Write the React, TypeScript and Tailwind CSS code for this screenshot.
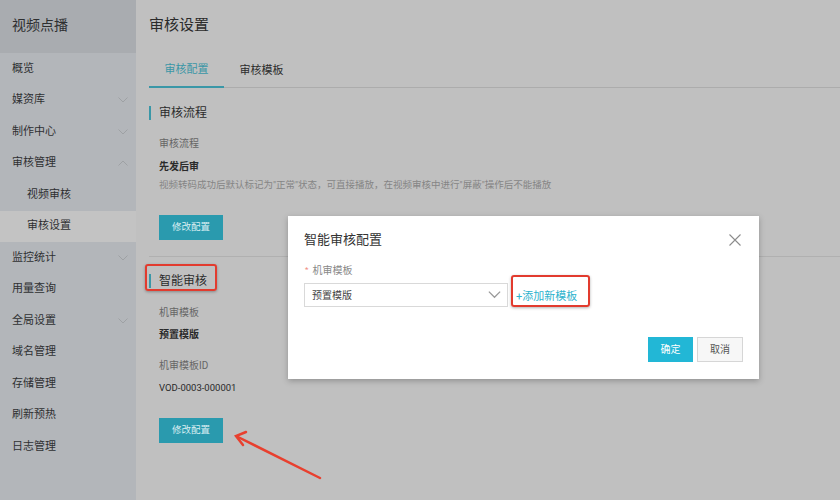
import { ReactNode } from "react";

const FONT = { fontFamily: 'Roboto, "Noto Sans CJK SC", sans-serif' };

type MenuItem = { label: string; chevron?: "down" | "up"; sub?: boolean; active?: boolean };

const menu: MenuItem[] = [
  { label: "概览" },
  { label: "媒资库", chevron: "down" },
  { label: "制作中心", chevron: "down" },
  { label: "审核管理", chevron: "up" },
  { label: "视频审核", sub: true },
  { label: "审核设置", sub: true, active: true },
  { label: "监控统计", chevron: "down" },
  { label: "用量查询" },
  { label: "全局设置", chevron: "down" },
  { label: "域名管理" },
  { label: "存储管理" },
  { label: "刷新预热" },
  { label: "日志管理" },
];

function Chevron({ dir, color = "#9ea1a4", w = 10 }: { dir: "down" | "up"; color?: string; w?: number }) {
  return (
    <svg width={w} height={w / 2 + 1} viewBox="0 0 10 6" fill="none">
      <polyline
        points={dir === "down" ? "0.5,0.5 5,5 9.5,0.5" : "0.5,5.5 5,1 9.5,5.5"}
        stroke={color}
        strokeWidth="1"
      />
    </svg>
  );
}

function Sidebar() {
  return (
    <aside className="w-[136px] shrink-0 bg-[#b3b6ba] flex flex-col">
      <div className="h-[53px] bg-[#a9acb0] flex items-center pl-3 pb-[3px] text-[14px] text-[#2e2f30]">
        视频点播
      </div>
      {menu.map((m) => (
        <div
          key={m.label}
          className={`h-[31.5px] flex items-center justify-between pr-[8px] text-[11px] text-[#2f3032] ${
            m.sub ? "pl-[27px]" : "pl-3"
          } ${m.active ? "bg-[#c3c3c3]" : ""}`}
        >
          <span>{m.label}</span>
          {m.chevron && <Chevron dir={m.chevron} />}
        </div>
      ))}
    </aside>
  );
}

function SectionTitle({ children }: { children: ReactNode }) {
  return (
    <div className="h-[14px] flex items-center">
      <div className="w-[2px] h-[14px] bg-[#3a97a7]" />
      <span className="ml-[8px] text-[12px] leading-[14px] text-[#2c2c2c]">{children}</span>
    </div>
  );
}

function EditButton({ className = "" }: { className?: string }) {
  return (
    <div
      className={`w-[64px] h-[25px] bg-[#2a9aae] text-[#d9eef2] text-[9.5px] flex items-center justify-center ${className}`}
    >
      修改配置
    </div>
  );
}

function Main() {
  return (
    <main className="flex-1 bg-[#c0c0c0] pl-[13px] relative">
      <div className="h-[50px] flex items-center text-[15px] text-[#2b2b2b]">审核设置</div>

      <div className="mt-[5px] h-[33px] border-b border-[#acacac] flex items-stretch">
        <div className="w-[75px] border-b-2 border-[#3a97a7] -mb-px flex items-center justify-center text-[11px] text-[#3a96a6]">
          审核配置
        </div>
        <div className="w-[75px] flex items-center justify-center text-[11px] text-[#2c2c2c]">
          审核模板
        </div>
      </div>

      <div className="mt-[18px]">
        <SectionTitle>审核流程</SectionTitle>
      </div>
      <div className="pl-[10px]">
        <div className="mt-[16px] h-[16px] leading-[16px] text-[10px] text-[#666]">审核流程</div>
        <div className="mt-[7px] h-[16px] leading-[16px] text-[10px] font-bold text-[#2a2a2a]">先发后审</div>
        <div className="mt-[2px] h-[16px] leading-[16px] text-[9.5px] text-[#858585]">
          视频转码成功后默认标记为"正常"状态，可直接播放，在视频审核中进行"屏蔽"操作后不能播放
        </div>
        <EditButton className="mt-[22px]" />
      </div>

      <div className="mt-[16px] h-px bg-[#b0b0b0]" />

      <div className="mt-[17px] relative w-fit">
        <SectionTitle>智能审核</SectionTitle>
        <div className="absolute -left-[4px] -top-[10px] w-[72px] h-[27px] border-2 border-[#e23b2e] rounded-[3px] shadow-[0_1px_3px_rgba(0,0,0,0.3)]" />
      </div>
      <div className="pl-[10px]">
        <div className="mt-[17px] h-[16px] leading-[16px] text-[10px] text-[#666]">机审模板</div>
        <div className="mt-[6px] h-[16px] leading-[16px] text-[10px] font-bold text-[#2a2a2a]">预置模版</div>
        <div className="mt-[15px] h-[16px] leading-[16px] text-[10px] text-[#666]">机审模板ID</div>
        <div className="mt-[6px] h-[16px] leading-[16px] text-[9.5px] text-[#2a2a2a]">VOD-0003-000001</div>
        <EditButton className="mt-[22px]" />
      </div>
    </main>
  );
}

function Modal() {
  return (
    <div className="absolute left-[288px] top-[216px] w-[471px] h-[163px] bg-white shadow-[0_2px_6px_rgba(0,0,0,0.25)] px-[16px] flex flex-col">
      <div className="mt-[15px] h-[18px] flex items-center justify-between">
        <span className="text-[13px] text-[#333]">智能审核配置</span>
        <svg width="12" height="12" viewBox="0 0 12 12" className="mr-[2px]">
          <path d="M0.5 0.5 L11.5 11.5 M11.5 0.5 L0.5 11.5" stroke="#8c8c8c" strokeWidth="1.1" />
        </svg>
      </div>
      <div className="mt-[14px] h-[14px] flex items-center text-[10px] text-[#888]">
        <span className="text-[#f08a80] text-[8px] mr-[4px] ml-[1px]">*</span>
        机审模板
      </div>
      <div className="mt-[6px] flex items-center">
        <div className="w-[204px] h-[24px] border border-[#d9d9d9] flex items-center justify-between pl-[7px] pr-[6px] text-[10px] text-[#444]">
          <span>预置模版</span>
          <Chevron dir="down" color="#999" w={13} />
        </div>
        <div className="relative ml-[8px]">
          <span className="text-[11px] text-[#2cb3cd]">+添加新模板</span>
          <div className="absolute -left-[5px] -top-[8px] w-[79px] h-[32px] border-2 border-[#e23b2e] rounded-[3px] shadow-[0_1px_3px_rgba(0,0,0,0.3)]" />
        </div>
      </div>
      <div className="mt-auto mb-[17px] flex justify-end gap-[4px]">
        <div className="w-[45px] h-[25px] bg-[#22b7d6] text-white text-[10px] flex items-center justify-center">
          确定
        </div>
        <div className="w-[46px] h-[25px] bg-[#f7f7f7] border border-[#d6d6d6] text-[#555] text-[10px] flex items-center justify-center">
          取消
        </div>
      </div>
    </div>
  );
}

function Arrow() {
  return (
    <svg className="absolute left-0 top-0 pointer-events-none" width="840" height="500">
      <g stroke="#e8402f" strokeWidth="2.5" strokeLinecap="round" fill="none">
        <line x1="320" y1="478" x2="238" y2="437" />
        <polyline points="246,432 236,436 243,445" />
      </g>
    </svg>
  );
}

export default function App() {
  return (
    <div className="relative w-[840px] h-[500px] overflow-hidden flex" style={FONT}>
      <Sidebar />
      <Main />
      <Modal />
      <Arrow />
    </div>
  );
}
